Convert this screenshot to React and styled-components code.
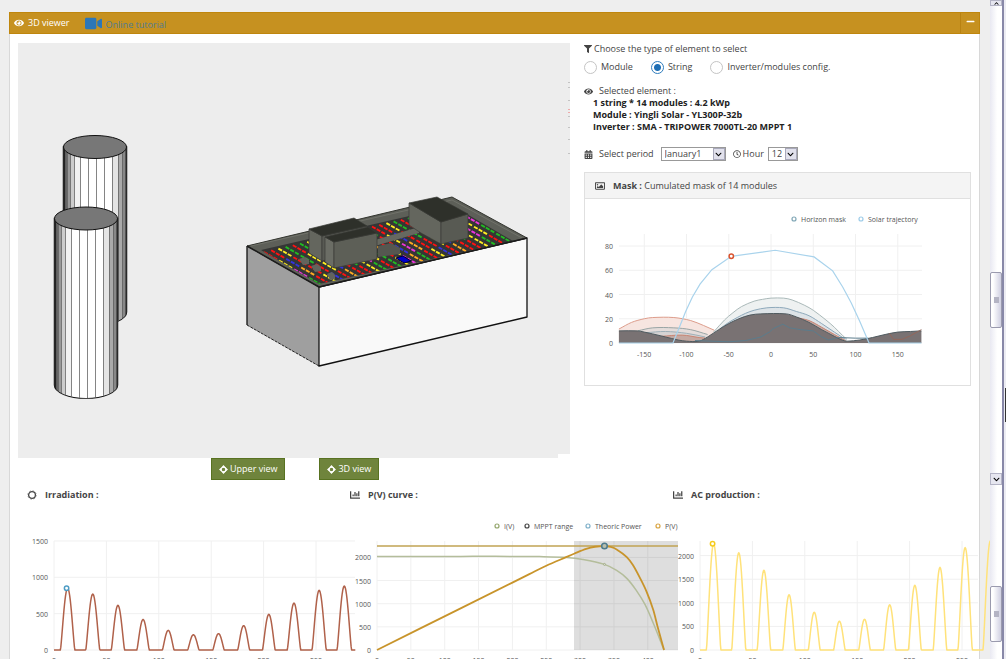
import React from "react";
import styled, { createGlobalStyle } from "styled-components";
import { FaEye, FaVideo, FaFilter, FaRegClock, FaCalendarAlt, FaRegImage, FaChartBar, FaMinus, FaChevronDown, FaChevronUp } from "react-icons/fa";

const GlobalStyle = createGlobalStyle`
* {
  box-sizing: border-box;
}
body {
  margin: 0;
  background: #eeeeee;
  color: #444;
  font-family: "Open Sans", "Noto Sans", sans-serif;
  font-size: 9px;
  line-height: 12px;
}
button, select, input {
  font: inherit;
  color: inherit;
}
`;

const Page = styled.div`
  display: flex;
  height: 100vh;
  overflow: hidden;
`;

const Main = styled.main`
  flex: 1;
  min-width: 0;
  padding: 12px 10px 0 9px;
  overflow: hidden;
`;

const Panel = styled.section`
  background: #fff;
  border: solid #d8d8d8;
  border-width: 0 1px;
`;

const PanelHeader = styled.header`
  display: flex;
  align-items: center;
  height: 22px;
  margin: 0 -1px;
  padding-left: 4px;
  background: #c69120;
  border: 1px solid #bf860d;
  color: #fff;
`;

const PanelTitle = styled.h2`
  margin: 0 15px 0 4px;
  font-size: 9px;
  font-weight: 400;
`;

const TutorialLink = styled.a`
  display: flex;
  align-items: flex-end;
  gap: 4px;
  flex: 1;
  color: #4f7c92;
  line-height: 14px;
  text-decoration: none;
`;

const CollapseButton = styled.button`
  width: 19px;
  height: 20px;
  padding: 0;
  border: 0;
  border-left: 1px solid #b98212;
  background: none;
  color: #fff;
`;

const Top = styled.div`
  display: grid;
  grid-template-columns: 552fr 387fr;
  gap: 14px;
  padding: 9px 8px 0;
`;

const Scene = styled.svg`
  display: block;
  width: 100%;
  background: #ededed;
`;

const Actions = styled.div`
  display: flex;
  gap: 34px;
  padding-left: 193px;
`;

const ViewButton = styled.button`
  display: flex;
  align-items: center;
  gap: 2px;
  height: 22px;
  padding: 0 7px;
  border: 1px solid #587221;
  background: #6f843c;
  color: #fff;
`;

const Line = styled.div`
  display: flex;
  align-items: center;
  gap: ${(p) => p.gap || "4px"};
`;

const Radios = styled.div`
  display: flex;
  align-items: center;
  gap: 18px;
  height: 24px;
`;

const Option = styled.label`
  display: flex;
  align-items: center;
  gap: 4px;
`;

const Radio = styled.input`
  appearance: none;
  width: 13px;
  height: 13px;
  margin: 0;
  border: 1px solid ${(p) => (p.defaultChecked ? "#2f7dbd" : "#c4c4c4")};
  border-radius: 50%;
  background: ${(p) => (p.defaultChecked ? "radial-gradient(#1f6fb5 3px, #fff 4px)" : "#fff")};
`;

const Element = styled.div`
  padding-top: 6px;
`;

const Detail = styled.div`
  padding-left: 9px;
  font-weight: 700;
  color: #222;
`;

const Period = styled.div`
  display: flex;
  align-items: center;
  gap: 7px;
  padding-top: 14px;
`;

const Field = styled.div`
  display: flex;
  align-items: center;
  gap: 4px;
`;

const SelectBox = styled.span`
  display: flex;
  width: ${(p) => p.w};
  height: 14px;
  border: 1px solid #999;
  background: #fff;
`;

const Select = styled.select`
  appearance: none;
  flex: 1;
  min-width: 0;
  padding: 0 3px;
  border: 0;
  background: none;
`;

const Arrow = styled.span`
  display: flex;
  align-items: center;
  justify-content: center;
  width: 12px;
  border: 1px solid #a9a9bb;
  background: #e1e1ec;
  color: #000;
`;

const Card = styled.section`
  margin-top: 11px;
  border: 1px solid #e0e0e0;
`;

const CardTitle = styled.h3`
  display: flex;
  align-items: center;
  gap: 8px;
  height: 26px;
  margin: 0;
  padding-left: 10px;
  border-bottom: 1px solid #e0e0e0;
  background: #f4f4f4;
  font-size: 9px;
  font-weight: 400;
`;

const Charts = styled.div`
  display: grid;
  grid-template-columns: repeat(3, minmax(0, 1fr));
  padding-top: 8px;
`;

const ChartTitle = styled.h3`
  display: flex;
  align-items: center;
  gap: 8px;
  height: 14px;
  margin: 0;
  padding-left: 17px;
  font-size: 9px;
  font-weight: 700;
`;

const Plot = styled.svg`
  display: block;
  width: ${(p) => p.w || "100%"};
  overflow: visible;
  font-size: 7px;
  fill: #555;
`;

const Rail = styled.div`
  display: flex;
  width: 16px;
`;

const Track = styled.div`
  display: flex;
  flex-direction: column;
  align-items: center;
  width: 12px;
  background: linear-gradient(90deg, #e9e9f2, #fff 60%);
`;

const Space = styled.div`
  flex: ${(p) => p.size} 0 0;
`;

const RailButton = styled.button`
  display: flex;
  align-items: center;
  justify-content: center;
  width: 12px;
  height: ${(p) => p.h};
  padding: 0;
  border: 1px solid #b4b4c6;
  background: #e6e6f0;
  color: #000;
`;

const Thumb = styled.div`
  width: 12px;
  height: 56px;
  border: 1px solid #9a9aae;
  border-radius: 2px;
  background: linear-gradient(90deg, #fff 20%, #d0d0e2);
  display: flex;
  align-items: center;
  justify-content: center;

  &::after {
    content: "";
    width: 5px;
    height: 6px;
    background: #b4b4c4;
  }
`;

const Edge = styled.div`
  display: flex;
  flex-direction: column;
  align-items: flex-end;
  flex: 1;
  border-left: 2px solid #8888a8;
  background: #ececf3;
`;

const EdgeMark = styled.div`
  flex: 34 0 0;
  width: 1px;
  background: #333;
`;

// line through the points, rounded off with Catmull-Rom segments
function smooth(pts) {
  let d = `M${pts[0][0]} ${pts[0][1]}`;
  for (let i = 0; i < pts.length - 1; i++) {
    const a = pts[i - 1] || pts[i];
    const b = pts[i];
    const c = pts[i + 1];
    const e = pts[i + 2] || c;
    const k = (c[0] - b[0]) / (c[0] - a[0]) / 3;
    const m = (c[0] - b[0]) / (e[0] - b[0]) / 3;
    d += `C${b[0] + (c[0] - a[0]) * k} ${b[1] + (c[1] - a[1]) * k} ${c[0] - (e[0] - b[0]) * m} ${c[1] - (e[1] - b[1]) * m} ${c[0]} ${c[1]}`;
  }
  return d;
}

function polyline(pts) {
  return "M" + pts.map((p) => p.join(" ")).join("L");
}

// hourly values of one typical day for each month
function days(peaks) {
  const pts = [];
  const max = Math.max(...peaks);
  peaks.forEach((peak, i) => {
    const half = 5 + (1.9 * peak) / max;
    for (let h = 0; h < 24; h += 0.5) {
      const t = (h - 13) / half;
      pts.push([i * 24 + h, Math.abs(t) < 1 ? peak * Math.cos((t * Math.PI) / 2) ** 1.2 : 0]);
    }
  });
  return pts;
}

function Axes({ left, top, right, bottom, xs, ys, X, Y, labelY }) {
  return (
    <g>
      {ys.map((v) => (
        <g key={v}>
          <path d={`M${left} ${Y(v)}H${right}`} stroke="#f0f0f0" />
          <text x={left - 6} y={Y(v) + 3} textAnchor="end">{v}</text>
        </g>
      ))}
      {xs.map((v) => (
        <g key={v}>
          <path d={`M${X(v)} ${top}V${bottom}`} stroke="#f0f0f0" />
          <text x={X(v)} y={labelY} textAnchor="middle">{v}</text>
        </g>
      ))}
    </g>
  );
}

function Legend({ items, y }) {
  return items.map(([x, color, label]) => (
    <g key={label}>
      <circle cx={x} cy={y - 3} r="2" fill="#fff" stroke={color} strokeWidth="1.2" />
      <text x={x + 7} y={y}>{label}</text>
    </g>
  ));
}

const solar = [[-180, 0], [-116, 0], [-109, 12], [-101, 26], [-93, 38], [-84, 48.5], [-70, 60.5], [-47, 71.5], [5, 76.5], [51, 71], [73, 59.5], [85, 46], [95, 33], [105, 18], [116, 0], [178, 0]];
const horizon = [[-180, 10], [-158, 10], [-150, 9], [-140, 7.5], [-125, 5], [-110, 2.5], [-100, 1.5], [-85, 1.5], [-75, 5], [-62, 11], [-50, 16], [-38, 20], [-25, 23], [-12, 24], [18, 24], [30, 21.5], [45, 17], [60, 11], [75, 5.5], [84, 2.5], [90, 1.5], [105, 2.5], [120, 4.5], [135, 7], [150, 9], [165, 9.5], [178, 10]];
const masks = [
  { color: "#dd9d8c", fill: "#f7e5e0", pts: [[-180, 11.5], [-165, 17], [-150, 20], [-140, 21], [-115, 21], [-95, 18.5], [-80, 14.5], [-67, 10.5]] },
  { color: "#9aa5a5", fill: "#e4dcda", pts: [[-158, 10], [-140, 12.5], [-115, 12.5], [-95, 11], [-75, 7]] },
  { color: "#9fb0b8", fill: "#d6d3d3", pts: [[-148, 8.5], [-125, 9.5], [-100, 8], [-78, 5]] },
  { color: "#c98573", fill: "#c4a9a2", pts: [[-130, 5.5], [-105, 6.5], [-85, 4.5], [-78, 4]] },
  { color: "#aab9b9", fill: "#eef1f1", pts: [[-68, 9], [-55, 19], [-45, 25], [-35, 30], [-20, 34.5], [-10, 36], [0, 37], [15, 37], [25, 35.5], [40, 31], [50, 27], [65, 19], [75, 13], [85, 6], [90, 3]] },
  { color: "#8ea9bb", fill: "#dde3e7", pts: [[-60, 12], [-50, 17], [-40, 21], [-30, 24.5], [-20, 27], [-5, 29], [15, 29], [30, 26], [45, 22.5], [60, 16], [75, 9], [88, 3]] },
  { color: "#c98573", fill: "#c4a9a2", pts: [[30, 21], [45, 18.5], [60, 13], [75, 7], [88, 2]] },
  { color: "#4f5a5f", fill: "#797273", pts: horizon },
];

function MaskChart() {
  const X = (v) => 186 + v * 0.845;
  const Y = (v) => 144 - v * 1.2125;
  const map = (pts) => pts.map(([a, b]) => [X(a), Y(b)]);
  return (
    <Plot viewBox="0 0 385 186" role="img" aria-label="Cumulated mask">
      <Legend y={23} items={[[209, "#7fa6b5", "Horizon mask"], [276, "#9ccbe8", "Solar trajectory"]]} />
      <Axes left={34} right={337} top={35} bottom={144} xs={[-150, -100, -50, 0, 50, 100, 150]} ys={[0, 20, 40, 60, 80]} X={X} Y={Y} labelY={158} />
      {masks.map((m, i) => (
        <g key={i}>
          <path d={`${smooth(map(m.pts))}V144H${X(m.pts[0][0])}Z`} fill={m.fill} />
          <path d={smooth(map(m.pts))} fill="none" stroke={m.color} />
        </g>
      ))}
      <path d={polyline(map([[140, 8], [145, 3], [155, 3], [165, 6], [178, 11]]))} fill="none" stroke="#93675b" />
      <path d={polyline(map([[-90, 2], [-50, 1], [-30, 2], [-12, 5], [-2, 9], [3, 12], [14, 15.5], [22, 12.5], [35, 11], [50, 10], [60, 5], [68, 2.5], [80, 4.5], [100, 4], [115, 4]]))} fill="none" stroke="#5b7c8c" />
      <path d={polyline(map(solar))} fill="none" stroke="#a9d3ec" strokeWidth="1.2" />
      <circle cx={X(-47)} cy={Y(71.5)} r="2.2" fill="#fff" stroke="#d9532f" strokeWidth="1.5" />
    </Plot>
  );
}

function DayChart({ peaks, scale, xs, ys, color, width, dot, right, label }) {
  const X = (v) => 44 + v * 1.048;
  const Y = (v) => 148 - v * scale;
  return (
    <Plot w="calc(100% + 23px)" viewBox="0 0 346 165" role="img" aria-label={label}>
      <Axes left={44} right={right} top={39} bottom={148} xs={xs} ys={ys} X={X} Y={Y} labelY={161} />
      <path d={polyline(days(peaks).map(([a, b]) => [X(a), Y(b)]))} fill="none" stroke={color} strokeWidth={width} strokeLinejoin="round" />
      <circle cx={X(12)} cy={Y(peaks[0])} r="2.2" fill="#fff" stroke={dot} strokeWidth="1.5" />
    </Plot>
  );
}

const power = [[0, 0], [125, 910], [200, 1456], [225, 1638], [250, 1820], [280, 2010], [291, 2079], [309, 2184], [322, 2230], [336, 2245], [345, 2225], [354, 2173], [369, 2007], [378, 1835], [388, 1568], [398, 1266], [408, 870], [415, 475], [424, 0]];
const current = [[0, 2022], [120, 2022], [200, 2022], [240, 2018], [280, 2000], [304, 1957], [336, 1849], [354, 1719], [369, 1547], [383, 1288], [396, 978], [408, 583], [424, 0]];

function PowerChart() {
  const X = (v) => 44 + v * 0.677;
  const Y = (v) => 148 - v * 0.0463;
  const map = (pts) => pts.map(([a, b]) => [X(a), Y(b)]);
  return (
    <Plot w="calc(100% + 23px)" viewBox="0 0 346 165" role="img" aria-label="P(V) curve">
      <Legend y={27} items={[[164, "#94a66c", "I(V)"], [194, "#444", "MPPT range"], [255, "#7fb0c9", "Theoric Power"], [325, "#d9a441", "P(V)"]]} />
      <Axes left={44} right={345} top={39} bottom={148} xs={[0, 50, 100, 150, 200, 250, 300, 350, 400]} ys={[0, 500, 1000, 1500, 2000]} X={X} Y={Y} labelY={161} />
      <rect x="241" y="39" width="104" height="109" fill="#000" fillOpacity=".13" />
      <path d={smooth(map(current))} fill="none" stroke="#b4bd9b" strokeWidth="1.5" />
      <path d={`M44 ${Y(2245)}H345`} stroke="#c0a353" strokeWidth="1.6" />
      <path d={smooth(map(power))} fill="none" stroke="#c8942b" strokeWidth="1.8" />
      <circle cx={X(336)} cy={Y(1849)} r="1" fill="#dfdfdf" stroke="#a5b088" />
      <circle cx={X(336)} cy={Y(2245)} r="2.8" fill="#b9bfae" stroke="#4e7b8c" strokeWidth="1.5" />
    </Plot>
  );
}

function Cylinder({ x, top, bottom, strips }) {
  return (
    <g>
      <path d={`M${x} ${top}V${bottom}A31.5 13 0 0 0 ${x + 63} ${bottom}V${top}Z`} fill="#fff" stroke="#111" strokeWidth="1.5" />
      <clipPath id={`side${x}`}>
        <path d={`M${x} ${top}V${bottom}A31.5 13 0 0 0 ${x + 63} ${bottom}V${top}Z`} />
      </clipPath>
      <g clipPath={`url(#side${x})`}>
        {strips.map(([a, w, fill]) => (
          <rect key={a} x={x + a} y={top} width={w} height={bottom - top + 14} fill={fill} stroke="#555" strokeWidth=".6" />
        ))}
      </g>
      <ellipse cx={x + 31.5} cy={top} rx="31.5" ry="11.5" fill="#777" stroke="#111" />
    </g>
  );
}

const strips = [[0, 2, "#222"], [2, 2, "#666"], [4, 3, "#999"], [7, 4, "#ccc"], [11, 6, "#f2f2f2"], [17, 8, "#fff"], [25, 8, "#fff"], [33, 8, "#fff"], [41, 8, "#fff"], [49, 6, "#e4e4e4"], [55, 4, "#aaa"], [59, 3, "#888"], [62, 1, "#333"]];
const colors = ["#f11", "#f11", "#fe2", "#2b2", "#f11", "#fe2", "#33d", "#f11", "#2b2", "#fe2", "#e3d", "#fa2"];

// the modules lie in rows that run parallel to the short side of the roof
function Modules() {
  const rows = [];
  for (let i = 0; i < 28; i++) {
    for (let j = 0; j < 4; j++) {
      const x = 264 + i * 7.2 + j * 15;
      const y = 252 - i * 1.7 + j * 8.6;
      rows.push(<path key={`${i}-${j}`} d={`M${x} ${y}l14 8`} stroke={colors[(i + j * 5 + Math.floor(i / 5) * 3) % 12]} />);
    }
  }
  return <g strokeWidth="1.9" strokeDasharray="4.2 1.2">{rows}</g>;
}

function Roof() {
  return (
    <g strokeLinejoin="round">
      <path d="M247 246L319 287V366L247 325Z" fill="#9f9f9f" />
      <path d="M319 366L247 325" stroke="#222" strokeDasharray="3 1" />
      <path d="M247 325V246" stroke="#111" strokeWidth="1.3" />
      <path d="M319 287L527 238V317L319 366Z" fill="#f9f9f9" stroke="#111" strokeWidth="1.3" />
      <path d="M247 246L452 197L527 238L319 287Z" fill="#5d5f58" stroke="#33352f" />
      <path d="M251 246L452 200L522 238" fill="none" stroke="#7d7f77" strokeWidth=".6" />
      <clipPath id="roof"><path d="M261 250L453 206L513 241L319 284Z" /></clipPath>
      <path d="M261 250L453 206L513 241L319 284Z" fill="#353635" />
      <g clipPath="url(#roof)"><Modules /></g>
      <path d="M375 240L419 227V233L375 246Z" fill="#666860" />
      <path d="M378 246L391 243L400 248V254L378 257Z" fill="#555750" />
      <path d="M396 258l7-2 8 5-7 2z" fill="#00c" stroke="#003" />
      <path d="M247 246L319 287L527 238" fill="none" stroke="#1c1c1c" strokeWidth="1.5" />
      <g stroke="#3a3b37" strokeWidth=".7">
        <path d="M309 229L322 236V261L309 253Z" fill="#64665e" />
        <path d="M322 236L367 226V250L322 261Z" fill="#585a53" />
        <path d="M309 229L354 218L367 226L322 236Z" fill="#2e302a" />
        <path d="M325 237L334 242V268L325 262Z" fill="#6b6d65" />
        <path d="M334 242L377 233V259L334 268Z" fill="#5d5f57" />
        <path d="M325 237L368 227L377 233L334 242Z" fill="#2e302a" />
        <path d="M409 203L441 222V244L421 233L409 225Z" fill="#64665e" />
        <path d="M441 222L468 214V238L441 244Z" fill="#585a53" />
        <path d="M409 203L437 197L468 214L441 222Z" fill="#2e302a" />
      </g>
      <path d="M299 259l6-2 4 3v4l-6 1zM311 266l6-2 4 3v4l-6 1zM327 274l5-2 3 3v4l-5 1z" fill="#62645d" />
    </g>
  );
}

function Viewer() {
  return (
    <Scene viewBox="18 43 552 415" role="img" aria-label="3D view of the roof">
      <Cylinder x={63.5} top={147} bottom={312} strips={strips} />
      <Cylinder x={54.5} top={218.5} bottom={385} strips={strips} />
      <Roof />
      <path d="M558 454h12v4h-12z" fill="#fff" />
      <path d="M569 82v1M569 87v1M569 100v1M569 116v1M569 127v1M569 139v1M569 153v1" stroke="#999" />
      <path d="M569 109v1M569 112v1" stroke="#e66" />
    </Scene>
  );
}

function MoveIcon() {
  return (
    <svg width="9" height="9" viewBox="0 0 9 9">
      <path d="M4.5 0L6.7 2.6H2.3ZM4.5 9L6.7 6.4H2.3ZM0 4.5L2.6 2.3V6.7ZM9 4.5L6.4 2.3V6.7Z" fill="#fff" />
      <circle cx="4.5" cy="4.5" r="2.4" fill="none" stroke="#fff" strokeWidth="1.2" />
    </svg>
  );
}

function SunIcon() {
  return (
    <svg width="10" height="10" viewBox="0 0 10 10">
      <circle cx="5" cy="5" r="3.4" fill="none" stroke="#444" strokeWidth="1.3" />
      <circle cx="5" cy="5" r="4.2" fill="none" stroke="#777" strokeWidth=".8" strokeDasharray="1.6 1.7" />
    </svg>
  );
}

function App() {
  return (
    <Page>
      <GlobalStyle />
      <Main>
        <Panel>
          <PanelHeader>
            <FaEye size={10} />
            <PanelTitle>3D viewer</PanelTitle>
            <TutorialLink href="#tutorial"><FaVideo size={17} color="#2d77b8" />Online tutorial</TutorialLink>
            <CollapseButton aria-label="Collapse"><FaMinus size={9} /></CollapseButton>
          </PanelHeader>
          <Top>
            <div>
              <Viewer />
              <Actions>
                <ViewButton><MoveIcon />Upper view</ViewButton>
                <ViewButton><MoveIcon />3D view</ViewButton>
              </Actions>
            </div>
            <div>
              <Line gap="2px"><FaFilter size={8} />Choose the type of element to select</Line>
              <Radios>
                <Option><Radio type="radio" name="kind" />Module</Option>
                <Option><Radio type="radio" name="kind" defaultChecked />String</Option>
                <Option><Radio type="radio" name="kind" />Inverter/modules config.</Option>
              </Radios>
              <Element>
                <Line gap="6px"><FaEye size={9} />Selected element :</Line>
                <Detail>1 string * 14 modules : 4.2 kWp</Detail>
                <Detail>Module : Yingli Solar - YL300P-32b</Detail>
                <Detail>Inverter : SMA - TRIPOWER 7000TL-20 MPPT 1</Detail>
              </Element>
              <Period>
                <Line gap="6px"><FaCalendarAlt size={9} /><label htmlFor="period">Select period</label></Line>
                <SelectBox w="65px">
                  <Select id="period"><option>January1</option></Select>
                  <Arrow><FaChevronDown size={7} /></Arrow>
                </SelectBox>
                <Field>
                  <Line gap="2px"><FaRegClock size={8} /><label htmlFor="hour">Hour</label></Line>
                  <SelectBox w="30px">
                    <Select id="hour"><option>12</option></Select>
                    <Arrow><FaChevronDown size={7} /></Arrow>
                  </SelectBox>
                </Field>
              </Period>
              <Card>
                <CardTitle><FaRegImage size={10} /><span><b>Mask :</b> Cumulated mask of 14 modules</span></CardTitle>
                <MaskChart />
              </Card>
            </div>
          </Top>
          <Charts>
            <div>
              <ChartTitle><SunIcon />Irradiation :</ChartTitle>
              <DayChart label="Irradiation" peaks={[850, 770, 615, 420, 270, 210, 225, 335, 490, 645, 820, 880]} scale={0.0727} xs={[0, 50, 100, 150, 200, 250]} ys={[0, 500, 1000, 1500]} right={345} color="#b0614a" width={1.5} dot="#4d9cc4" />
            </div>
            <div>
              <ChartTitle><FaChartBar size={10} />P(V) curve :</ChartTitle>
              <PowerChart />
            </div>
            <div>
              <ChartTitle><FaChartBar size={10} />AC production :</ChartTitle>
              <DayChart label="AC production" peaks={[2250, 2060, 1690, 1170, 800, 610, 650, 960, 1370, 1750, 2170, 2310]} scale={0.0472} xs={[0, 50, 100, 150, 200, 250]} ys={[0, 500, 1000, 1500, 2000]} right={322} color="#ffe27a" width={1.5} dot="#f5cb1d" />
            </div>
          </Charts>
        </Panel>
      </Main>
      <Rail>
        <Track>
          <RailButton h="6px" aria-label="Scroll up"><FaChevronUp size={5} /></RailButton>
          <Space size={266} />
          <Thumb />
          <Space size={145} />
          <RailButton h="12px" aria-label="Scroll down"><FaChevronDown size={7} /></RailButton>
          <Space size={101} />
          <Thumb />
          <Space size={17} />
        </Track>
        <Edge>
          <Space size={388} />
          <EdgeMark />
          <Space size={237} />
        </Edge>
      </Rail>
    </Page>
  );
}

export default App;
